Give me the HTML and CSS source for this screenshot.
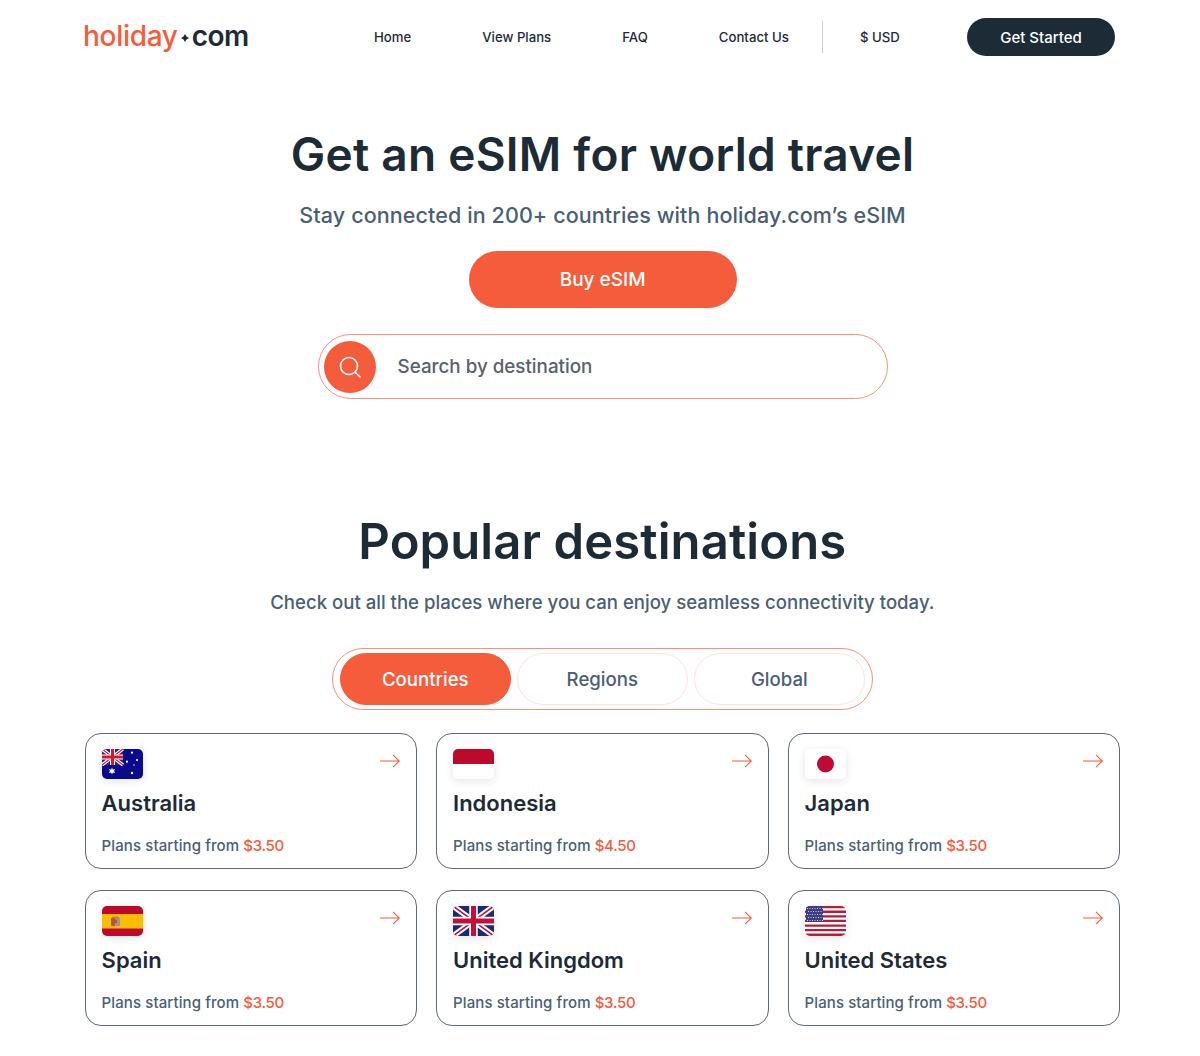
FILE: index.html
```html
<!DOCTYPE html>
<html lang="en">
<head>
<meta charset="utf-8">
<title>holiday.com eSIM</title>
<link rel="stylesheet" href="styles.css">
</head>
<body>
<header class="topbar">
  <a class="logo" href="#"><span class="logo-a">holiday</span><svg class="logo-dot" viewBox="0 0 8 8" width="8" height="8"><path d="M4 0 5.500 2.500 8 4 5.500 5.500 4 8 2.500 5.500 0 4 2.500 2.500Z" fill="#1d2b36"/></svg><span class="logo-b">com</span></a>
  <nav class="nav">
    <a href="#">Home</a>
    <a href="#">View Plans</a>
    <a href="#">FAQ</a>
    <a href="#">Contact Us</a>
    <span class="divider"></span>
    <a href="#">$ USD</a>
  </nav>
  <a class="cta" href="#">Get Started</a>
</header>

<section class="hero">
  <h1>Get an eSIM for world travel</h1>
  <p class="hero-sub">Stay connected in 200+ countries with holiday.com’s eSIM</p>
  <a class="buy" href="#">Buy eSIM</a>
  <div class="search">
    <span class="search-btn">
      <svg viewBox="0 0 24 24" width="24" height="24" fill="none" stroke="#fff" stroke-width="1.6" stroke-linecap="round"><circle cx="11" cy="11" r="8.500"/><path d="M17.200 17.200 22 22"/></svg>
    </span>
    <span class="search-text">Search by destination</span>
  </div>
</section>

<section class="popular">
  <h2>Popular destinations</h2>
  <p class="popular-sub">Check out all the places where you can enjoy seamless connectivity today.</p>
  <div class="tabs">
    <span class="tab active">Countries</span>
    <span class="tab">Regions</span>
    <span class="tab">Global</span>
  </div>
  <div class="grid">
    <a class="card" href="#">
      <div class="card-top">
        <svg class="flag" viewBox="0 0 41 30"><rect width="41" height="30" fill="#0a0a8c"/><rect width="21" height="16" fill="#1c2a8c"/><g stroke="#fff" stroke-width="3.400"><path d="M0 0 21 16M21 0 0 16"/></g><g stroke="#d8142e" stroke-width="1.200"><path d="M0 0 21 16M21 0 0 16"/></g><path d="M10.500 0V16M0 8H21" stroke="#fff" stroke-width="5"/><path d="M10.500 0V16M0 8H21" stroke="#d8142e" stroke-width="3"/><g fill="#fff"><path d="M10 18.500 10.900 20.700 13.200 20 12 22 13.200 24 10.900 23.400 10 25.500 9.100 23.400 6.800 24 8 22 6.800 20 9.100 20.700Z"/><circle cx="30" cy="3.700" r="1.100"/><circle cx="25" cy="12.700" r="1.100"/><circle cx="35" cy="11" r="1.100"/><circle cx="32" cy="16" r=".7"/><circle cx="30" cy="24" r="1.200"/></g></svg>
        <svg class="arrow" viewBox="0 0 20 14" width="20" height="14" fill="none" stroke="#f55c3c" stroke-width="1.100"><path d="M0 7H19.300M13 .8 19.300 7 13 13.200"/></svg>
      </div>
      <h3>Australia</h3>
      <p class="price">Plans starting from <span>$3.50</span></p>
    </a>
    <a class="card" href="#">
      <div class="card-top">
        <svg class="flag" viewBox="0 0 41 30"><rect width="41" height="30" fill="#fff"/><rect width="41" height="15" fill="#bd0a2c"/></svg>
        <svg class="arrow" viewBox="0 0 20 14" width="20" height="14" fill="none" stroke="#f55c3c" stroke-width="1.100"><path d="M0 7H19.300M13 .8 19.300 7 13 13.200"/></svg>
      </div>
      <h3>Indonesia</h3>
      <p class="price">Plans starting from <span>$4.50</span></p>
    </a>
    <a class="card" href="#">
      <div class="card-top">
        <svg class="flag" viewBox="0 0 41 30"><rect width="41" height="30" fill="#fff"/><circle cx="20.500" cy="15" r="8.500" fill="#bd0a36"/></svg>
        <svg class="arrow" viewBox="0 0 20 14" width="20" height="14" fill="none" stroke="#f55c3c" stroke-width="1.100"><path d="M0 7H19.300M13 .8 19.300 7 13 13.200"/></svg>
      </div>
      <h3>Japan</h3>
      <p class="price">Plans starting from <span>$3.50</span></p>
    </a>
    <a class="card" href="#">
      <div class="card-top">
        <svg class="flag" viewBox="0 0 41 30"><rect width="41" height="30" fill="#bd0a2c"/><rect y="8" width="41" height="14.500" fill="#fbbd00"/><path d="M9 12H13.500V19.500Q11 21 9 19.500Z" fill="#b5562f"/><path d="M13.500 12H18V19.500Q16 21 13.500 19.500Z" fill="#a88f96"/><rect x="12" y="13.500" width="3" height="3.500" fill="#c6406a"/><path d="M10 10.500H17V12H10Z" fill="#b98a2c"/></svg>
        <svg class="arrow" viewBox="0 0 20 14" width="20" height="14" fill="none" stroke="#f55c3c" stroke-width="1.100"><path d="M0 7H19.300M13 .8 19.300 7 13 13.200"/></svg>
      </div>
      <h3>Spain</h3>
      <p class="price">Plans starting from <span>$3.50</span></p>
    </a>
    <a class="card" href="#">
      <div class="card-top">
        <svg class="flag" viewBox="0 0 41 30"><rect width="41" height="30" fill="#1c2a6e"/><path d="M0 0 41 30M41 0 0 30" stroke="#fff" stroke-width="5.500"/><path d="M0 0 41 30M41 0 0 30" stroke="#c2103a" stroke-width="1.600"/><path d="M20.500 0V30M0 15H41" stroke="#fff" stroke-width="8.500"/><path d="M20.500 0V30M0 15H41" stroke="#c2103a" stroke-width="5"/></svg>
        <svg class="arrow" viewBox="0 0 20 14" width="20" height="14" fill="none" stroke="#f55c3c" stroke-width="1.100"><path d="M0 7H19.300M13 .8 19.300 7 13 13.200"/></svg>
      </div>
      <h3>United Kingdom</h3>
      <p class="price">Plans starting from <span>$3.50</span></p>
    </a>
    <a class="card" href="#">
      <div class="card-top">
        <svg class="flag" viewBox="0 0 41 30"><rect width="41" height="30" fill="#fff"/><path d="M0 1.150H41M0 5.750H41M0 10.350H41M0 14.950H41M0 19.550H41M0 24.150H41M0 28.750H41" stroke="#b01f3c" stroke-width="2.300"/><rect x="1" width="17" height="16" fill="#3c3f7f"/><path d="M2 2.500H18M3 5.500H18M2 8.500H18M3 11.500H18M2 14.500H18" stroke="#c9cbe4" stroke-width="1" stroke-dasharray="1 1.500"/></svg>
        <svg class="arrow" viewBox="0 0 20 14" width="20" height="14" fill="none" stroke="#f55c3c" stroke-width="1.100"><path d="M0 7H19.300M13 .8 19.300 7 13 13.200"/></svg>
      </div>
      <h3>United States</h3>
      <p class="price">Plans starting from <span>$3.50</span></p>
    </a>
  </div>
</section>
</body>
</html>
```
FILE: styles.css
```css
* { box-sizing: border-box; }
html, body { margin: 0; padding: 0; }
body {
  width: 1200px;
  height: 1056px;
  overflow: hidden;
  padding: 0 80px 0 84.600px;
  background: #fff;
  color: #1d2b36;
  font-family: Inter, "Liberation Sans", sans-serif;
}
a { color: inherit; text-decoration: none; }
h1, h2, h3, p { margin: 0; }

.topbar {
  display: flex;
  align-items: center;
  height: 74px;
  margin-left: -1.600px;
  padding-right: 5px;
}
.logo {
  display: flex;
  align-items: center;
  width: 291px;
  margin-top: -2px;
  font-size: 28px;
  font-weight: 500;
  letter-spacing: -0.300px;
}
.logo-a { color: #f55c3c; }
.logo-b { color: #1d2b36; font-weight: 600; letter-spacing: -0.500px; }
.logo-dot { margin: 4px 3px 0; }
.nav {
  display: flex;
  align-items: center;
  gap: 71px;
  font-size: 13.200px;
  font-weight: 500;
}
.divider {
  width: 1px;
  height: 32px;
  margin: 0 -34px 0 -38px;
  background: #c9d0d6;
}
.cta {
  display: flex;
  align-items: center;
  justify-content: center;
  width: 148px;
  height: 38px;
  margin-left: auto;
  border-radius: 19px;
  background: #1d2b36;
  color: #fff;
  font-size: 15px;
  font-weight: 500;
}

.hero {
  display: flex;
  flex-direction: column;
  align-items: center;
  padding-top: 51px;
  padding-left: 0.600px;
}
h1 {
  font-size: 46px;
  line-height: 58px;
  font-weight: 600;
  letter-spacing: 0.250px;
}
.hero-sub {
  margin-top: 17px;
  color: #4a6072;
  font-size: 21.500px;
  line-height: 30px;
  font-weight: 500;
  letter-spacing: 0.100px;
}
.buy {
  display: flex;
  align-items: center;
  justify-content: center;
  width: 268px;
  height: 57px;
  margin-top: 21px;
  border-radius: 29px;
  background: #f55c3c;
  color: #fff;
  font-size: 19px;
  font-weight: 500;
}
.search {
  display: flex;
  align-items: center;
  gap: 22px;
  width: 570px;
  height: 65px;
  margin-top: 26px;
  padding-left: 5px;
  border: 1px solid #f6917c;
  border-radius: 33px;
}
.search-btn {
  display: flex;
  align-items: center;
  justify-content: center;
  width: 52px;
  height: 52px;
  border-radius: 50%;
  background: #f55c3c;
}
.search-text {
  color: #56626c;
  font-size: 18.800px;
  font-weight: 500;
}

.popular {
  display: flex;
  flex-direction: column;
  align-items: center;
  padding-top: 111px;
}
h2 {
  font-size: 49px;
  line-height: 64px;
  font-weight: 600;
  letter-spacing: 0.100px;
}
.popular-sub {
  margin-top: 14px;
  color: #4a6072;
  font-size: 18.600px;
  line-height: 28px;
  font-weight: 500;
}
.tabs {
  display: flex;
  gap: 6px;
  width: 541px;
  height: 62px;
  margin-top: 32px;
  padding: 4px 7px;
  border: 1px solid #f6917c;
  border-radius: 31px;
}
.tab {
  display: flex;
  flex: 1;
  align-items: center;
  justify-content: center;
  border: 1px solid #fde4df;
  border-radius: 26px;
  color: #4a6072;
  font-size: 18.600px;
  font-weight: 500;
}
.tab.active {
  border-color: #f55c3c;
  background: #f55c3c;
  color: #fff;
}
.grid {
  display: grid;
  grid-template-columns: repeat(3, 1fr);
  gap: 21px 19px;
  width: 100%;
  margin-top: 23px;
}
.card {
  display: flex;
  flex-direction: column;
  height: 136px;
  padding: 15px 16px 0;
  border: 1px solid #5d6a75;
  border-radius: 16px;
}
.card-top {
  display: flex;
  align-items: flex-start;
  justify-content: space-between;
}
.flag {
  width: 41px;
  height: 30px;
  border-radius: 5px;
  box-shadow: 0 2px 8px rgba(29, 43, 54, 0.12);
}
.arrow { margin-top: 5px; }
h3 {
  margin-top: 10px;
  font-size: 22px;
  line-height: 28px;
  font-weight: 600;
}
.price {
  margin-top: 19px;
  color: #4a6072;
  font-size: 15px;
  line-height: 20px;
  font-weight: 500;
  letter-spacing: 0.100px;
}
.price span { color: #f55c3c; letter-spacing: -0.300px; }
```
